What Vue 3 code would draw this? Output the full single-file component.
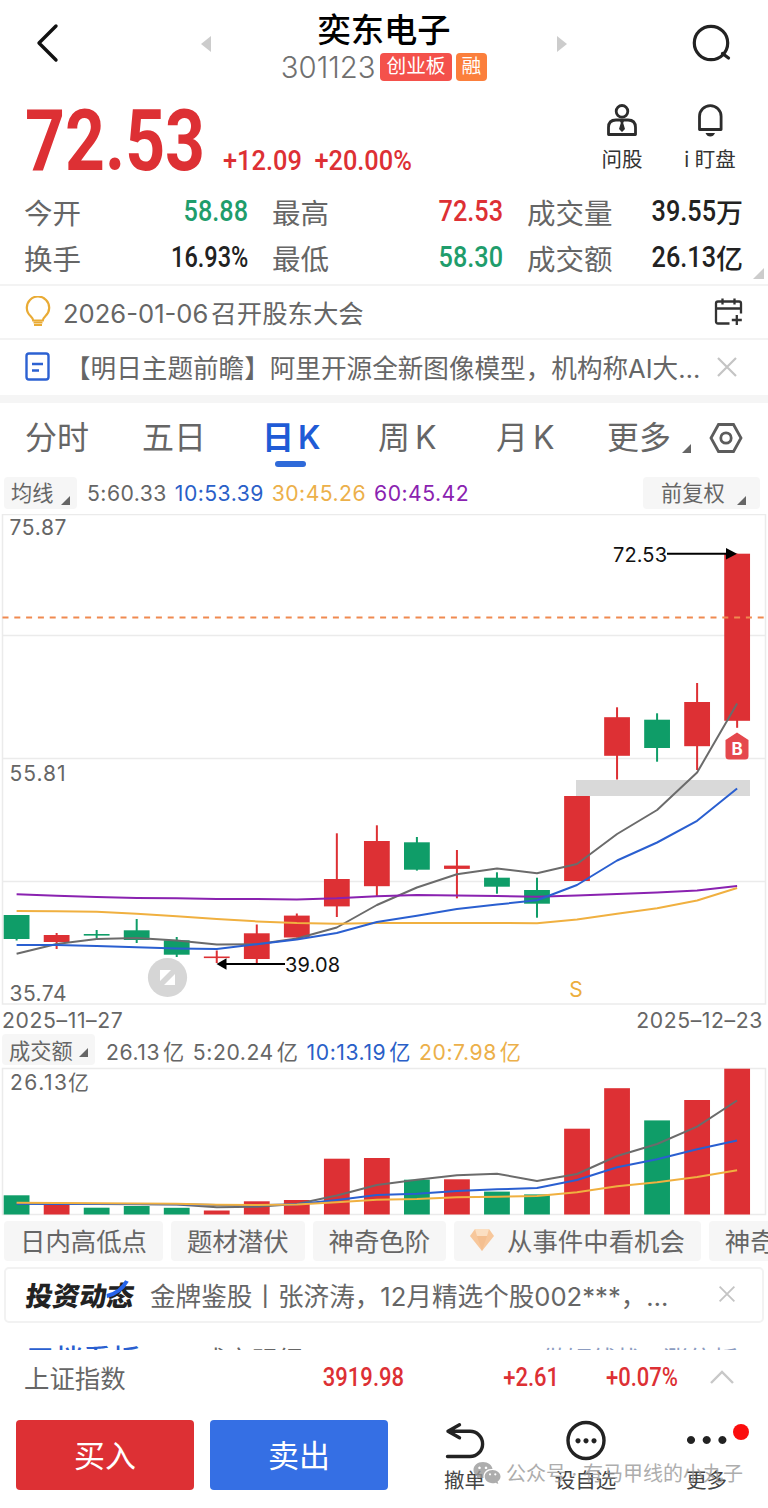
<script setup>
const stats = [
  { label: '今开', value: '58.88', color: 'green' },
  { label: '最高', value: '72.53', color: 'red' },
  { label: '成交量', value: '39.55', unit: '万', color: 'dark' },
  { label: '换手', value: '16.93%', color: 'dark rate' },
  { label: '最低', value: '58.30', color: 'green' },
  { label: '成交额', value: '26.13', unit: '亿', color: 'dark' },
]

const tabs = [
  { name: '分时' },
  { name: '五日' },
  { name: '日 K', active: true },
  { name: '周 K' },
  { name: '月 K' },
  { name: '更多', more: true },
]

const chips = ['日内高低点', '题材潜伏', '神奇色阶', '从事件中看机会', '神奇九转']

// [涨跌, 实体上沿, 实体下沿, 影线上沿, 影线下沿]
const candles = [
  ['down', 915, 939, 915, 940.5],
  ['up', 935, 942, 933, 949],
  ['down', 934, 935.6, 930, 938],
  ['down', 930.3, 940, 919, 943],
  ['down', 940.3, 954.7, 937, 957],
  ['up', 956.5, 958.1, 950.5, 963],
  ['up', 933.3, 959, 924.5, 963],
  ['up', 915.6, 937.5, 913.5, 937.5],
  ['up', 879, 906.4, 833.3, 917],
  ['up', 841, 886.2, 825.3, 896],
  ['down', 842.3, 869.7, 837, 870.6],
  ['up', 865.6, 868.9, 850, 898.3],
  ['down', 877.7, 886.7, 872.3, 893.7],
  ['down', 890, 903.7, 877.7, 917.7],
  ['up', 796, 881, 796, 881],
  ['up', 717.2, 755.8, 707.3, 779.5],
  ['down', 719.7, 748, 713.3, 761.7],
  ['up', 702, 746.2, 683, 770],
  ['up', 553.7, 720.8, 553.7, 727.8],
]

const volumes = [
  1195.3, 1204.5, 1207.7, 1206, 1207.8, 1210.5, 1201.3, 1200, 1158.7, 1158,
  1179.7, 1179.3, 1191.6, 1194.4, 1128.7, 1088.2, 1120.4, 1100, 1068.7,
]

const priceLines = [
  { cls: 'ma5', ys: [953.8, 944, 939, 938, 940.5, 944.5, 944.2, 938.5, 927.5, 905, 887.5, 874.3, 868.5, 873.3, 864, 834, 810, 772.5, 703.5] },
  { cls: 'ma60', ys: [894.2, 895.7, 897, 897.9, 898.3, 898.9, 899.1, 899.4, 898.3, 896.2, 895, 895.6, 896, 896.7, 895.6, 894, 892.5, 890.5, 886] },
  { cls: 'ma30', ys: [911, 911.2, 911.8, 913.7, 916.3, 919, 921.4, 923, 923.7, 923, 923, 923, 923, 923.3, 919.5, 913.8, 908.3, 900.5, 888] },
  { cls: 'ma10', ys: [945, 945, 946, 947.2, 948.5, 949, 944.2, 939.5, 933, 922, 915.7, 909, 904.5, 900.3, 885, 860.5, 842.5, 820.8, 788.5] },
]

const volumeLines = [
  { cls: 'ma5', ys: [1203.5, 1203.8, 1204, 1204.2, 1204.4, 1207.2, 1206.8, 1204, 1195.5, 1185, 1179.7, 1175.3, 1173.7, 1181, 1174, 1156, 1144, 1126.7, 1100.5] },
  { cls: 'ma10', ys: [1203.8, 1204, 1204, 1204, 1204.2, 1205, 1205.2, 1204.3, 1200, 1195, 1193.7, 1191, 1189.3, 1188, 1180, 1167.3, 1159.3, 1149.3, 1140.6] },
  { cls: 'ma30', ys: [1202.7, 1203, 1203.3, 1203.5, 1203.8, 1204.8, 1205, 1204.5, 1202.3, 1199.7, 1199, 1197.3, 1196.7, 1196, 1192.3, 1186.3, 1182.3, 1177, 1170.2] },
]

const cx = (i) => 16.6 + i * 40.03
const points = (ys) => ys.map((y, i) => `${cx(i).toFixed(1)},${y}`).join(' ')
</script>

<template>
  <div class="page">
    <header class="header">
      <svg class="back" width="30" height="44" viewBox="0 0 30 44">
        <path d="M24 5 L7 22 L24 39" />
      </svg>
      <span class="tri left"></span>
      <div class="title">
        <h1>奕东电子</h1>
        <div class="code">
          <span class="num">301123</span>
          <span class="tag">创业板</span>
          <span class="tag orange">融</span>
        </div>
      </div>
      <span class="tri right"></span>
      <svg class="search" width="44" height="44" viewBox="0 0 44 44">
        <circle cx="21" cy="21" r="16.7" />
        <path d="M32.5 31.5 L38.5 36" />
      </svg>
    </header>

    <section class="price">
      <span class="last"><b>72.53</b></span>
      <span class="change"><b>+12.09&nbsp; +20.00%</b></span>
      <div class="tools">
        <div class="tool">
          <svg width="36" height="36" viewBox="0 0 36 36">
            <circle cx="18" cy="8.3" r="5.8" />
            <path d="M4.5 31.5 V24.5 Q4.5 17 12 17 H24 Q31.5 17 31.5 24.5 V31.5 Z" />
            <path class="fill" d="M15.8 17.5 H20.2 L19.2 20 L21 26 L18 29 L15 26 L16.8 20 Z" />
          </svg>
          <span>问股</span>
        </div>
        <div class="tool">
          <svg width="36" height="36" viewBox="0 0 36 36">
            <path d="M7.5 26.5 V13.5 A10.8 10.8 0 0 1 29.1 13.5 V26.5 Z" />
            <path class="fill" d="M13.5 30 H23 Q21.5 33.5 18.3 33.5 Q15 33.5 13.5 30 Z" />
          </svg>
          <span>i 盯盘</span>
        </div>
      </div>
    </section>

    <section class="stats">
      <div v-for="s in stats" :key="s.label" class="stat">
        <span class="label">{{ s.label }}</span>
        <span class="value" :class="s.color"><b>{{ s.value }}</b><i v-if="s.unit">{{ s.unit }}</i></span>
      </div>
      <span class="corner light"></span>
    </section>

    <section class="notice">
      <svg class="bulb" width="26" height="32" viewBox="0 0 26 32">
        <path d="M8.2 24.5 Q8 22.5 5.5 20 A11.2 11.2 0 1 1 20.5 20 Q18 22.5 17.8 24.5 Z" />
        <path d="M8.5 26.5 H17.5 M9 29 H17" />
      </svg>
      <span class="event"><em>2026-01-06</em>召开股东大会</span>
      <svg class="calendar" width="30" height="30" viewBox="0 0 30 30">
        <path d="M15.5 26.5 H4 Q2 26.5 2 24.5 V6.5 Q2 4.5 4 4.5 H25 Q27 4.5 27 6.5 V16.5 M2 11.5 H27 M8.5 1.5 V7.5 M20.5 1.5 V7.5 M22.8 18 V28 M17.8 23 H27.8" />
      </svg>
    </section>

    <section class="notice news">
      <svg class="doc" width="26" height="30" viewBox="0 0 26 30">
        <rect x="1.5" y="1.5" width="22" height="26" rx="2.5" />
        <path d="M7 12 H18 M7 18.5 H14" />
      </svg>
      <span class="headline">【明日主题前瞻】阿里开源全新图像模型，机构称AI大…</span>
      <svg class="close" width="22" height="22" viewBox="0 0 22 22">
        <path d="M2 2 L20 20 M20 2 L2 20" />
      </svg>
    </section>

    <nav class="tabs">
      <span v-for="t in tabs" :key="t.name" class="tab" :class="{ active: t.active }">
        {{ t.name }}<i v-if="t.more" class="corner"></i>
      </span>
      <svg class="gear" width="34" height="32" viewBox="0 0 34 32">
        <path d="M9.5 2.5 H24.5 L32 16 L24.5 29.5 H9.5 L2 16 Z" />
        <circle cx="17" cy="16" r="5.2" />
      </svg>
    </nav>

    <div class="legend">
      <span class="select">均线<i class="corner"></i></span>
      <span class="c5">5:60.33</span>
      <span class="c10">10:53.39</span>
      <span class="c30">30:45.26</span>
      <span class="c60">60:45.42</span>
      <span class="select adjust">前复权<i class="corner"></i></span>
    </div>

    <svg class="kline" width="768" height="491" viewBox="0 514 768 491">
      <rect class="grid" x="2.5" y="514.5" width="763" height="489.5" />
      <path class="grid" d="M2.5 635.5 H765.5 M2.5 758.5 H765.5 M2.5 881.5 H765.5" />
      <rect class="gap" x="576" y="780" width="174" height="16" />
      <g v-for="(c, i) in candles" :key="i" :class="c[0]">
        <rect :x="cx(i) - 1" :y="c[3]" width="2" :height="c[4] - c[3]" />
        <rect :x="cx(i) - 12.9" :y="c[1]" width="25.8" :height="c[2] - c[1]" />
      </g>
      <polyline v-for="l in priceLines" :key="l.cls" class="line" :class="l.cls" :points="points(l.ys)" />
      <path class="dash" d="M2.5 617.4 H765.5" />
      <text class="axis" x="9.5" y="535" textLength="57">75.87</text>
      <text class="axis" x="9.5" y="781" textLength="56">55.81</text>
      <text class="axis" x="9.5" y="1001" textLength="57">35.74</text>
      <path class="arrow" d="M667 553.7 H728" />
      <path d="M737 553.7 L726 548 V559.4 Z" />
      <text class="mark" x="613" y="562" textLength="54">72.53</text>
      <path class="arrow" d="M226 964 H285" />
      <path d="M216.5 964 L226.5 958.3 V969.7 Z" />
      <text class="mark" x="285" y="972" textLength="55">39.08</text>
      <circle class="zoom" cx="167.5" cy="977.5" r="19.6" />
      <path class="zoom-icon" d="M160 970 H171 L160 981 Z M175 985 H164 L175 974 Z" />
      <text class="sell" x="569.3" y="997">S</text>
      <path class="buy" d="M737 732.5 L748.5 740 V756 Q748.5 759.5 745 759.5 H729 Q725.5 759.5 725.5 756 V740 Z" />
      <text class="buy-text" x="737" y="755">B</text>
    </svg>

    <div class="dates">
      <span>2025–11–27</span>
      <span>2025–12–23</span>
    </div>

    <div class="legend volume-legend">
      <span class="select">成交额<i class="corner"></i></span>
      <span class="c5">26.13<i>亿</i></span>
      <span class="c5">5:20.24<i>亿</i></span>
      <span class="c10">10:13.19<i>亿</i></span>
      <span class="c30">20:7.98<i>亿</i></span>
    </div>

    <svg class="volume" width="768" height="149" viewBox="0 1067 768 149">
      <rect class="grid" x="2.5" y="1068.5" width="763" height="146" />
      <rect
        v-for="(v, i) in volumes"
        :key="i"
        :class="candles[i][0]"
        :x="cx(i) - 12.9"
        :y="v"
        width="25.8"
        :height="1214.5 - v"
      />
      <polyline v-for="l in volumeLines" :key="l.cls" class="line" :class="l.cls" :points="points(l.ys)" />
      <text class="axis" x="10" y="1090" textLength="57">26.13</text>
      <text class="axis" x="68" y="1090">亿</text>
    </svg>

    <div class="chips">
      <span v-for="(c, i) in chips" :key="c" class="chip">
        <svg v-if="i === 3" width="24" height="22" viewBox="0 0 24 22">
          <path fill="#f7c79b" d="M5 0 H19 L24 7 L12 22 L0 7 Z" />
          <path fill="#fbdfc2" d="M5 0 H19 L17 7 H7 Z" />
          <path fill="#f4bf90" d="M7 7 H17 L12 22 Z" />
        </svg>
        {{ c }}
      </span>
    </div>

    <div class="card">
      <span class="brand">
        投资动态
        <svg width="22" height="20" viewBox="0 0 22 20">
          <path d="M19 1 Q14 13 1 16" />
        </svg>
      </span>
      <span class="card-text">金牌鉴股丨张济涛，12月精选个股002***，…</span>
      <svg class="close" width="18" height="18" viewBox="0 0 22 22">
        <path d="M2 2 L20 20 M20 2 L2 20" />
      </svg>
    </div>

    <div class="peek">
      <b>五档看板</b>
      <span>成交明细</span>
      <em>做短线找 · 涨停板</em>
    </div>

    <div class="index">
      <span class="index-name">上证指数</span>
      <b class="n1">3919.98</b>
      <b class="n2">+2.61</b>
      <b class="n3">+0.07%</b>
      <svg width="26" height="16" viewBox="0 0 26 16">
        <path d="M2 14 L13 3 L24 14" />
      </svg>
    </div>

    <footer class="footer">
      <button class="buy-btn">买入</button>
      <button class="sell-btn">卖出</button>
      <div class="action">
        <svg width="42" height="42" viewBox="0 0 42 42">
          <path d="M3.5 36.5 H26 A12.6 12.6 0 0 0 26 11.300 H4 M15.5 4.800 L4 11.300 L15.5 17.800" />
        </svg>
        <span>撤单</span>
      </div>
      <div class="action">
        <svg width="42" height="42" viewBox="0 0 42 42">
          <circle cx="21" cy="20.5" r="18" />
          <path class="fill" d="M13 18.2a2.6 2.6 0 1 0 .01 0z M21 18.2a2.6 2.6 0 1 0 .01 0z M29 18.2a2.6 2.6 0 1 0 .01 0z" />
        </svg>
        <span>设自选</span>
      </div>
      <div class="action">
        <svg width="42" height="42" viewBox="0 0 42 42">
          <path class="fill" d="M5 16a4 4 0 1 0 .01 0z M20.7 16a4 4 0 1 0 .01 0z M36.4 16a4 4 0 1 0 .01 0z" />
        </svg>
        <span>更多</span>
        <i class="dot"></i>
      </div>
      <div class="watermark">
        <svg width="28" height="24" viewBox="0 0 28 24">
          <path d="M10 1 C4.5 1 .5 4.5 .5 9 C.5 11.5 1.8 13.7 4 15.2 L3.2 18 L6.5 16.4 Q8.2 17 10.6 17 A8 7.5 0 0 1 19.5 8 C19 4 15 1 10 1 Z" />
          <path d="M19.5 9 C15 9 11.7 12 11.7 15.6 C11.7 19.3 15 22.2 19.5 22.2 Q21 22.2 22.5 21.7 L25.3 23 L24.6 20.6 C26.4 19.4 27.5 17.6 27.5 15.6 C27.5 12 24 9 19.5 9 Z" />
          <path class="eyes" d="M6.5 5.5a1.3 1.3 0 1 0 .01 0z M13 5.5a1.3 1.3 0 1 0 .01 0z M17 12.2a1.1 1.1 0 1 0 .01 0z M22.3 12.2a1.1 1.1 0 1 0 .01 0z" />
        </svg>
        <span>公众号 · 有马甲线的小丸子</span>
      </div>
    </footer>
  </div>
</template>

<style>
body {
  margin: 0;
  background: #fff;
}
</style>

<style scoped>
.page {
  width: 768px;
  height: 1508px;
  overflow: hidden;
  display: flex;
  flex-direction: column;
  background: #fff;
  color: #666;
  font-family: Inter, "Noto Sans CJK SC", sans-serif;
  box-sizing: border-box;
}

.page > * {
  flex-shrink: 0;
  box-sizing: border-box;
}

svg {
  display: block;
  flex-shrink: 0;
}

i,
em {
  font-style: normal;
}

.header {
  display: flex;
  height: 90px;
  padding: 0 32px;
}

.back {
  margin-top: 21px;
  fill: none;
  stroke: #111;
  stroke-width: 3.4;
  stroke-linecap: round;
  stroke-linejoin: round;
}

.tri {
  width: 0;
  height: 0;
  margin-top: 36px;
  border: 8px solid transparent;
}

.tri.left {
  margin-left: 139px;
  border-right: 10px solid #ccc;
  border-left: 0;
}

.tri.right {
  border-left: 10px solid #ccc;
  border-right: 0;
}

.title {
  width: 346px;
  display: flex;
  flex-direction: column;
  align-items: center;
}

h1 {
  margin: 7px 0 0;
  color: #000;
  font-size: 33.3px;
  line-height: 47px;
  font-weight: 500;
}

.code {
  display: flex;
  align-items: center;
  gap: 4px;
  height: 28px;
  margin-top: -1px;
}

.num {
  color: #707070;
  font-size: 29.3px;
  font-weight: 300;
  margin-right: 1px;
}

.tag {
  height: 28px;
  line-height: 27px;
  padding: 0 6px;
  border-radius: 4px;
  background: #f4514b;
  color: #fff;
  font-size: 19.7px;
}

.tag.orange {
  background: #fb7f3c;
}

.search {
  margin-left: 123px;
  margin-top: 22px;
  fill: none;
  stroke: #222;
  stroke-width: 3.2;
  stroke-linecap: round;
}

.price {
  display: flex;
  height: 100px;
  padding-left: 25px;
}

.price b,
.value b,
.index b {
  display: inline-block;
  font-family: Roboto, sans-serif;
  font-weight: 500;
}

.last {
  width: 198px;
  color: #dd3034;
}

.last b {
  font-size: 86px;
  line-height: 101px;
  font-weight: 700;
  transform: scaleX(0.81);
  transform-origin: left;
}

.change {
  width: 353px;
  color: #dd3034;
}

.change b {
  margin-top: 54px;
  font-size: 28.5px;
  line-height: 34px;
  transform: scaleX(0.89);
  transform-origin: left;
  white-space: nowrap;
}

.tools {
  display: flex;
  padding-top: 13px;
}

.tool {
  width: 92px;
  display: flex;
  flex-direction: column;
  align-items: center;
  color: #333;
  font-size: 20.5px;
  line-height: 42px;
}

.tool:last-child {
  width: 84px;
}

.tool svg {
  fill: none;
  stroke: #2c2c2c;
  stroke-width: 2.8;
  stroke-linejoin: round;
}

.tool .fill {
  fill: #2c2c2c;
  stroke: none;
}

.stats {
  position: relative;
  display: grid;
  grid-template-columns: 224px 231px 216px;
  column-gap: 24px;
  grid-auto-rows: 46px;
  height: 98px;
  margin-top: -2px;
  padding-left: 24px;
  border-bottom: 2px solid #f3f3f3;
}

.stat {
  display: flex;
  justify-content: space-between;
  align-items: center;
  font-size: 28.5px;
}

.value {
  display: flex;
  align-items: center;
}

.value b {
  font-size: 29px;
  transform: scaleX(0.87);
  transform-origin: right;
}

.rate b {
  transform: scaleX(0.81);
}

.value i {
  font-weight: 500;
  font-size: 27px;
}

.red {
  color: #dd3034;
}

.green {
  color: #1f9d6c;
}

.dark {
  color: #222;
}

.corner {
  width: 0;
  height: 0;
  border-left: 9px solid transparent;
  border-bottom: 9px solid #666;
}

.corner.light {
  position: absolute;
  right: 4px;
  bottom: 5px;
  border-left-width: 11px;
  border-bottom: 11px solid #ccc;
}

.notice {
  display: flex;
  align-items: center;
  height: 54px;
  padding: 0 24px 0 25px;
  font-size: 25.4px;
  border-bottom: 2px solid #f3f3f3;
}

.bulb {
  fill: none;
  stroke: #e9ab35;
  stroke-width: 2.2;
}

.event {
  flex: 1;
  margin-left: 12px;
}

.event em {
  font-size: 25.6px;
  margin-right: 3px;
}

.calendar {
  fill: none;
  stroke: #333;
  stroke-width: 2.3;
}

.notice.news {
  height: 63px;
  padding-bottom: 1px;
  border-bottom: 8px solid #f5f5f5;
}

.doc {
  fill: none;
  stroke: #2c61d2;
  stroke-width: 2.4;
}

.headline {
  flex: 1;
  margin-left: 14px;
  margin-top: -2px;
  font-size: 25.6px;
  white-space: nowrap;
}

.close {
  fill: none;
  stroke: #c4c4c4;
  stroke-width: 2.2;
}

.news .close {
  margin-right: 6px;
}

.tabs {
  display: flex;
  align-items: center;
  height: 72px;
  padding: 0 25px;
  font-size: 32px;
}

.tab {
  position: relative;
  display: flex;
  align-items: flex-end;
  flex-shrink: 0;
  width: 117px;
  white-space: nowrap;
  word-spacing: -4px;
  line-height: 70px;
  padding-bottom: 2px;
}

.tab:nth-child(2) {
  width: 120px;
}

.tab:nth-child(3) {
  width: 116px;
}

.tab:nth-child(4) {
  width: 118px;
}

.tab:nth-child(5) {
  width: 111px;
}

.tab .corner {
  margin: 0 0 20px 11px;
}

.tab:nth-child(6) {
  width: 102px;
}

.active {
  color: #1f5bd6;
  font-weight: 600;
}

.active::after {
  content: "";
  position: absolute;
  left: 13px;
  bottom: 8px;
  width: 31px;
  height: 6px;
  border-radius: 3px;
  background: #2f6ad9;
}

.gear {
  margin-top: -2px;
  fill: none;
  stroke: #5c5c5c;
  stroke-width: 2.8;
}

.legend {
  display: flex;
  align-items: center;
  height: 39px;
  padding: 0 8px 4px 4px;
  font-size: 21.2px;
  gap: 8px;
  white-space: nowrap;
}

.legend > span:not(.select) {
  letter-spacing: 0.45px;
}

.select {
  display: flex;
  align-items: flex-end;
  justify-content: space-between;
  box-sizing: border-box;
  width: 73px;
  height: 32px;
  padding: 0 7px;
  margin-right: 2px;
  line-height: 31px;
  border-radius: 4px;
  background: #f6f6f6;
}

.select .corner {
  margin-bottom: 4px;
}

.adjust {
  width: 117px;
  margin-left: auto;
  margin-right: 0;
  padding: 0 14px 0 18px;
}

.c10 {
  color: #2a5fc8;
}

.c30 {
  color: #ecb04a;
}

.c60 {
  color: #8a22b0;
}

.grid {
  fill: none;
  stroke: #ebebeb;
  stroke-width: 1.5;
}

.gap {
  fill: #d9d9d9;
}

.up {
  fill: #dd3034;
}

.down {
  fill: #0f9d68;
}

.line {
  fill: none;
  stroke-width: 2;
  stroke-linejoin: round;
}

.ma5 {
  stroke: #6b6b6b;
}

.ma10 {
  stroke: #2a5fd0;
}

.ma30 {
  stroke: #f0b040;
}

.ma60 {
  stroke: #8a22b0;
}

.dash {
  stroke: #f08a50;
  stroke-width: 2;
  stroke-dasharray: 6 5.8;
}

.axis {
  fill: #666;
  font-size: 21px;
}

.mark {
  fill: #111;
  font-size: 20px;
}

.arrow {
  stroke: #000;
  stroke-width: 2;
}

.zoom {
  fill: #d6d6d6;
}

.zoom-icon {
  fill: #fff;
}

.sell {
  fill: #ecae3c;
  font-size: 21px;
}

.buy {
  fill: #e5484d;
}

.buy-text {
  fill: #fff;
  font-size: 17px;
  font-weight: 700;
  text-anchor: middle;
}

.dates {
  display: flex;
  justify-content: space-between;
  height: 29px;
  padding: 0 5px 0 2px;
  font-size: 21.2px;
  line-height: 31px;
  letter-spacing: 0.6px;
}

.volume-legend {
  height: 33px;
  padding: 0 4px 0 2px;
}

.volume-legend > span:not(.select) {
  letter-spacing: 0.55px;
}

.volume-legend .select {
  width: 93px;
  height: 31px;
  line-height: 28px;
  margin: -2px 3px 0 0;
}

.volume-legend .select .corner {
  margin-bottom: 8px;
}

.volume-legend i:not(.corner) {
  margin-left: 3px;
}

.chips {
  display: flex;
  gap: 8px;
  height: 51px;
  padding: 5px 0 6px 4px;
  overflow: hidden;
}

.chip {
  display: flex;
  flex-shrink: 0;
  align-items: center;
  gap: 13px;
  box-sizing: border-box;
  height: 40px;
  padding: 0 16px 2px;
  border-radius: 4px;
  background: #f6f6f6;
  font-size: 25.4px;
  white-space: nowrap;
}

.card {
  display: flex;
  align-items: center;
  height: 56px;
  margin: 0 4px;
  padding: 0 26px 2px 20px;
  border: 2px solid #f2f2f2;
  border-radius: 5px;
  font-size: 25.6px;
  white-space: nowrap;
}

.brand {
  position: relative;
  width: 110px;
  color: #222;
  font-size: 27px;
  font-weight: 900;
  transform: skewX(-8deg);
}

.brand svg {
  position: absolute;
  right: 8px;
  top: 5px;
  fill: none;
  stroke: #2463eb;
  stroke-width: 4.2;
}

.card-text {
  flex: 1;
  margin-left: 14px;
}

.peek {
  display: flex;
  height: 27px;
  padding: 21px 30px 0 26px;
  overflow: hidden;
  font-size: 28.5px;
  line-height: 32px;
}

.peek b {
  color: #2a5fd0;
  font-weight: 500;
}

.peek span {
  margin-left: 61px;
  font-size: 25.4px;
  line-height: 31px;
}

.peek em {
  margin-left: auto;
  color: #8c9cc0;
  font-size: 25px;
  line-height: 33px;
}

.index {
  display: flex;
  align-items: center;
  height: 57px;
  padding: 0 33px 3px 24px;
  font-size: 25.4px;
  background: #fff;
}

.index b {
  color: #dd3034;
  font-size: 25px;
  transform: scaleX(0.88);
  transform-origin: right;
  text-align: right;
}

.n1 {
  width: 278px;
}

.n2 {
  width: 155px;
}

.n3 {
  width: 119px;
}

.index svg {
  margin-left: auto;
  fill: none;
  stroke: #c8c8c8;
  stroke-width: 2.4;
}

.footer {
  position: relative;
  display: flex;
  height: 101px;
  padding: 13px 0 0 16px;
}

.footer button {
  width: 178px;
  height: 70px;
  margin-right: 16px;
  padding: 0 0 3px;
  border: 0;
  border-radius: 4px;
  color: #fff;
  font: 400 31px "Noto Sans CJK SC", sans-serif;
}

.footer .buy-btn {
  background: #dd3034;
}

.footer .sell-btn {
  background: #356fe4;
}

.action {
  position: relative;
  display: flex;
  flex-direction: column;
  align-items: center;
  width: 121px;
  color: #444;
  font-size: 20.5px;
  line-height: 37px;
}

.action svg {
  fill: none;
  stroke: #222;
  stroke-width: 3.4;
  stroke-linecap: round;
  stroke-linejoin: round;
}

.action .fill {
  fill: #222;
  stroke: none;
}

.dot {
  position: absolute;
  right: 18px;
  top: 4px;
  width: 16px;
  height: 16px;
  border-radius: 50%;
  background: #fb0d0d;
}

.watermark {
  position: absolute;
  left: 473px;
  top: 53px;
  display: flex;
  align-items: center;
  gap: 5px;
  font-size: 20px;
  line-height: 28px;
  color: #999;
  opacity: 0.8;
  white-space: nowrap;
}

.watermark svg {
  margin-top: -2px;
  fill: #999;
}

.watermark .eyes {
  fill: #fff;
}
</style>
